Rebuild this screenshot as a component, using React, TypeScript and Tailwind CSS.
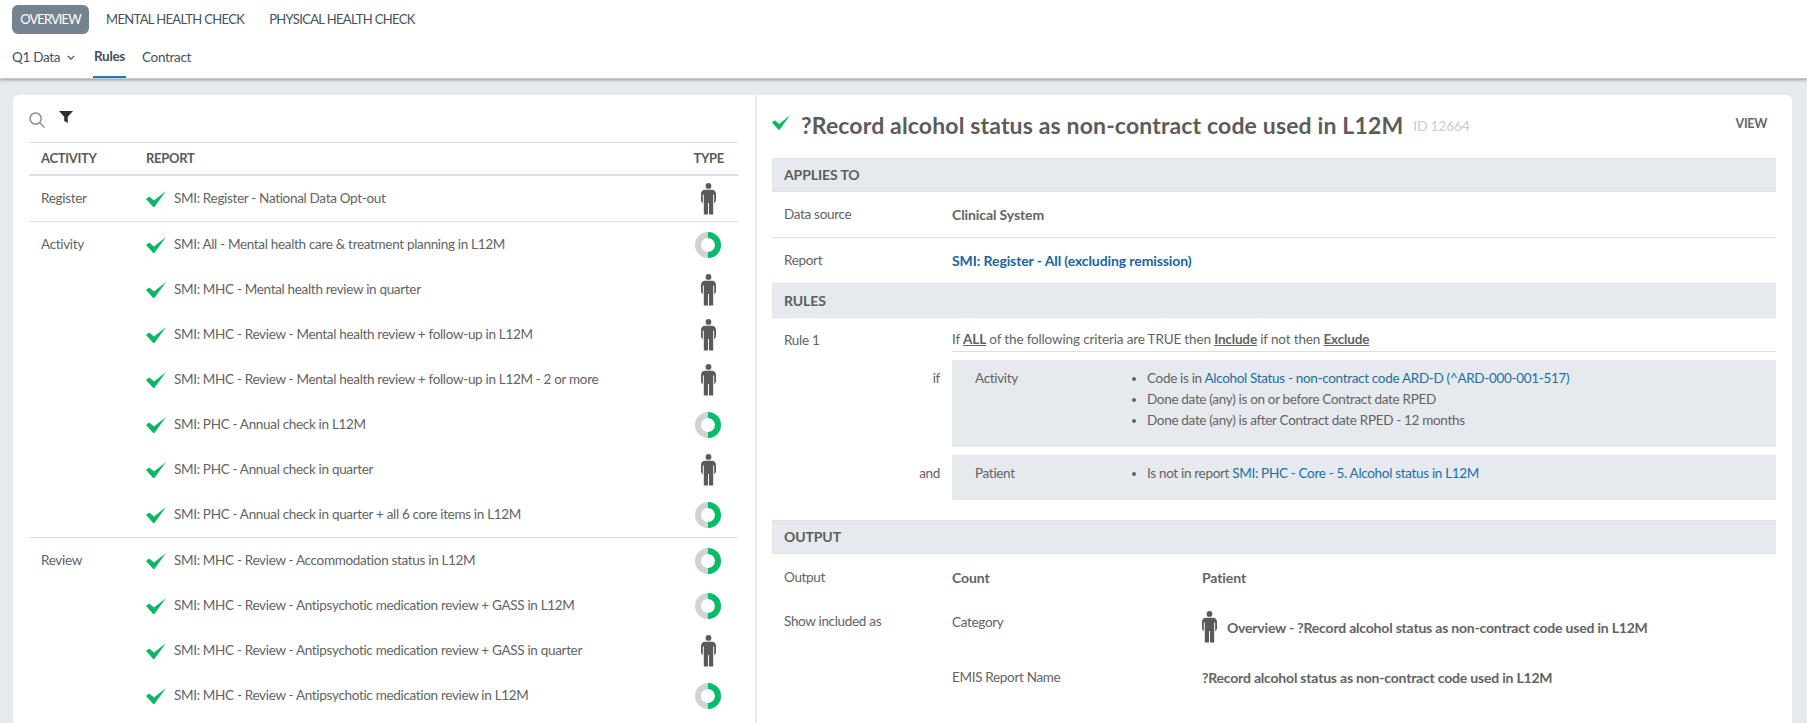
const F = "[font-family:Lato,'Noto_Sans',sans-serif]";

function Check({ className = "w-[20px] h-[16px]" }: { className?: string }) {
  return (
    <svg viewBox="0 0 20 16" className={className + " shrink-0"}>
      <path d="M0 8 L3.2 5.4 L8 9.6 L20 0 L8.4 16 L7.2 16 Z" fill="#0db665" />
    </svg>
  );
}

function Person({ className = "w-[15px] h-[32px]" }: { className?: string }) {
  return (
    <svg viewBox="0 0 15 32" className={className + " shrink-0"}>
      <circle cx="7.5" cy="2.9" r="2.9" fill="#5a5a5a" />
      <path d="M4 6.8 H11 C13.4 6.8 15 8.6 15 11 V18 L13.2 20.6 V11.6 H12.2 V31.5 H8 V20 H7 V31.5 H2.8 V11.6 H1.8 V20.6 L0 18 V11 C0 8.6 1.6 6.8 4 6.8 Z" fill="#5a5a5a" />
    </svg>
  );
}

function Donut() {
  return (
    <svg viewBox="0 0 26 26" className="w-[26px] h-[26px] shrink-0">
      <circle cx="13" cy="13" r="10" fill="none" stroke="#ced3d5" strokeWidth="6" />
      <path d="M13 3 A10 10 0 0 1 13 23" fill="none" stroke="#05bd68" strokeWidth="6" />
    </svg>
  );
}

type Row = { text: string; type: "p" | "d" };
const groups: { name: string; rows: Row[] }[] = [
  { name: "Register", rows: [{ text: "SMI: Register - National Data Opt-out", type: "p" }] },
  {
    name: "Activity",
    rows: [
      { text: "SMI: All - Mental health care & treatment planning in L12M", type: "d" },
      { text: "SMI: MHC - Mental health review in quarter", type: "p" },
      { text: "SMI: MHC - Review - Mental health review + follow-up in L12M", type: "p" },
      { text: "SMI: MHC - Review - Mental health review + follow-up in L12M - 2 or more", type: "p" },
      { text: "SMI: PHC - Annual check in L12M", type: "d" },
      { text: "SMI: PHC - Annual check in quarter", type: "p" },
      { text: "SMI: PHC - Annual check in quarter + all 6 core items in L12M", type: "d" },
    ],
  },
  {
    name: "Review",
    rows: [
      { text: "SMI: MHC - Review - Accommodation status in L12M", type: "d" },
      { text: "SMI: MHC - Review - Antipsychotic medication review + GASS in L12M", type: "d" },
      { text: "SMI: MHC - Review - Antipsychotic medication review + GASS in quarter", type: "p" },
      { text: "SMI: MHC - Review - Antipsychotic medication review in L12M", type: "d" },
    ],
  },
];

const B = "font-bold text-[14px] tracking-[-0.1px]";

function SectionHead({ children, h = "h-[35px]" }: { children: string; h?: string }) {
  return (
    <div className={h + " flex items-center pb-[1px] px-[12px] bg-[#e6eaee] border-y border-[#dfe3e6] text-[14px] tracking-[-0.1px] font-bold text-[#5c5c5c]"}>
      {children}
    </div>
  );
}

export default function App() {
  return (
    <div className={F + " h-[723px] w-[1807px] overflow-hidden flex flex-col bg-[#e6eaee] text-[13.5px] text-[#636363] tracking-[-0.32px]"}>
      <header className="h-[79px] shrink-0 bg-white shadow-[0_1px_3px_rgba(0,0,0,0.35)] border-b border-[#c9cccf] pl-[12px] z-10">
        <nav className="flex items-center pt-[5px] h-[34px] text-[#44525e] text-[13px] tracking-[-0.65px]">
          <div className="h-[29px] w-[77px] rounded-[6px] bg-[#74838f] text-white flex items-center justify-center tracking-[-0.9px]">OVERVIEW</div>
          <div className="ml-[17px]">MENTAL HEALTH CHECK</div>
          <div className="ml-[25px]">PHYSICAL HEALTH CHECK</div>
        </nav>
        <nav className="flex mt-[7px] h-[37px] text-[#44525e]">
          <div className="flex items-center h-[33px] w-[81px]">
            Q1 Data
            <svg viewBox="0 0 10 6" className="w-[8px] h-[5px] ml-[7px]"><path d="M1 1 L5 5 L9 1" fill="none" stroke="#44525e" strokeWidth="1.6" /></svg>
          </div>
          <div className="w-[33px] h-[37px] pb-[4px] flex items-center justify-center font-bold border-b-[2px] border-[#1b7db8]">Rules</div>
          <div className="ml-[16px] h-[33px] flex items-center">Contract</div>
        </nav>
      </header>

      <main className="flex-1 min-h-0 mt-[16px] ml-[13px] mr-[15px] flex bg-white rounded-t-[6px] overflow-hidden">
        <section className="w-[742px] shrink-0 pl-[16px] pr-[17px] overflow-hidden">
          <div className="h-[47px] flex items-start pt-[17px] gap-[14px]">
            <svg viewBox="0 0 16 16" className="w-[16px] h-[16px]"><circle cx="6.6" cy="6.6" r="5.6" fill="none" stroke="#8d8d8d" strokeWidth="1.5" /><path d="M10.8 10.8 L15.5 15.5" stroke="#8d8d8d" strokeWidth="1.5" /></svg>
            <svg viewBox="0 0 14 12" className="w-[14px] h-[12px] -mt-[1px]"><path d="M0 0 H14 L8.8 5.8 V12 L5.2 10 V5.8 Z" fill="#2f2f2f" /></svg>
          </div>
          <div className="h-[34px] flex items-center border-t border-b-2 border-[#dde0e3] font-bold text-[#5a5a5a] pl-[12px] pr-[14px] text-[13px] tracking-[-0.3px]">
            <div className="w-[105px]">ACTIVITY</div>
            <div className="flex-1">REPORT</div>
            <div>TYPE</div>
          </div>
          {groups.map((g) => (
            <div key={g.name} className="flex border-b border-[#dde0e3] last:border-b-0">
              <div className="w-[117px] pl-[12px] pt-[12px] shrink-0">{g.name}</div>
              <div className="flex-1 min-w-0">
                {g.rows.map((r) => (
                  <div key={r.text} className="h-[45px] flex items-center">
                    <Check />
                    <div className="ml-[8px] flex-1">{r.text}</div>
                    <div className="w-[32px] mr-[14px] flex justify-center">{r.type === "p" ? <Person /> : <Donut />}</div>
                  </div>
                ))}
              </div>
            </div>
          ))}
        </section>

        <section className="flex-1 min-w-0 border-l-[2px] border-[#e6eaee] pl-[15px] pr-[16px]">
          <div className="h-[63px] flex items-start pt-[19px] pr-[9px]">
            <Check className="w-[18px] h-[17px]" />
            <h1 className="ml-[11px] text-[23px] leading-[28px] font-bold text-[#5c5c5c] mt-[-3px] tracking-[0.15px]">?Record alcohol status as non-contract code used in L12M</h1>
            <span className="ml-[10px] text-[14px] text-[#cbcbcb] mt-[1px]">ID 12664</span>
            <span className="ml-auto text-[12.5px] font-bold text-[#666] mt-[1px]">VIEW</span>
          </div>
          <SectionHead h="h-[34px]">APPLIES TO</SectionHead>
          <div className="flex h-[46px] items-center border-b border-[#dde0e3] pl-[12px]">
            <div className="w-[168px]">Data source</div>
            <div className={B}>Clinical System</div>
          </div>
          <div className="flex h-[45px] items-center pl-[12px]">
            <div className="w-[168px]">Report</div>
            <div className={B + " text-[#17669f]"}>SMI: Register - All (excluding remission)</div>
          </div>
          <SectionHead>RULES</SectionHead>
          <div className="flex pl-[12px] pt-[11px] h-[202px]">
            <div className="w-[168px] pt-[1px]">Rule 1</div>
            <div className="flex-1 min-w-0">
              <div className="h-[23px] border-b border-[#dde0e3] tracking-[-0.15px]">
                If <b className="underline">ALL</b> of the following criteria are TRUE then <b className="underline">Include</b> if not then <b className="underline">Exclude</b>
              </div>
              <div className="mt-[8px] flex">
                <div className="w-[0px] relative"><span className="absolute right-[12px] top-[8px]">if</span></div>
                <div className="flex-1 h-[87px] bg-[#e6eaee] flex pt-[8px] pl-[23px]">
                  <div className="w-[157px]">Activity</div>
                  <ul className="leading-[21px] list-disc pl-[15px]">
                    <li>Code is in <span className="text-[#1b6ea8]">Alcohol Status - non-contract code ARD-D (^ARD-000-001-517)</span></li>
                    <li>Done date (any) is on or before Contract date RPED</li>
                    <li>Done date (any) is after Contract date RPED - 12 months</li>
                  </ul>
                </div>
              </div>
              <div className="mt-[8px] flex">
                <div className="w-[0px] relative"><span className="absolute right-[12px] top-[8px]">and</span></div>
                <div className="flex-1 h-[45px] bg-[#e6eaee] flex pt-[8px] pl-[23px]">
                  <div className="w-[157px]">Patient</div>
                  <ul className="leading-[21px] list-disc pl-[15px]">
                    <li>Is not in report <span className="text-[#1b6ea8]">SMI: PHC - Core - 5. Alcohol status in L12M</span></li>
                  </ul>
                </div>
              </div>
            </div>
          </div>
          <SectionHead h="h-[34px]">OUTPUT</SectionHead>
          <div className="flex pl-[12px] h-[46px] items-center">
            <div className="w-[168px]">Output</div>
            <div className={"w-[250px] " + B}>Count</div>
            <div className={B}>Patient</div>
          </div>
          <div className="flex pl-[12px] h-[67px] pt-[12px]">
            <div className="w-[168px] -mt-[1px]">Show included as</div>
            <div className="w-[250px]">Category</div>
            <div className="flex items-center gap-[10px] h-[32px] -mt-[1px] font-bold text-[14px] tracking-[-0.2px]"><Person />Overview - ?Record alcohol status as non-contract code used in L12M</div>
          </div>
          <div className="flex pl-[12px] h-[40px]">
            <div className="w-[168px]"></div>
            <div className="w-[250px]">EMIS Report Name</div>
            <div className="font-bold text-[14px] tracking-[-0.2px]">?Record alcohol status as non-contract code used in L12M</div>
          </div>
        </section>
      </main>
    </div>
  );
}
